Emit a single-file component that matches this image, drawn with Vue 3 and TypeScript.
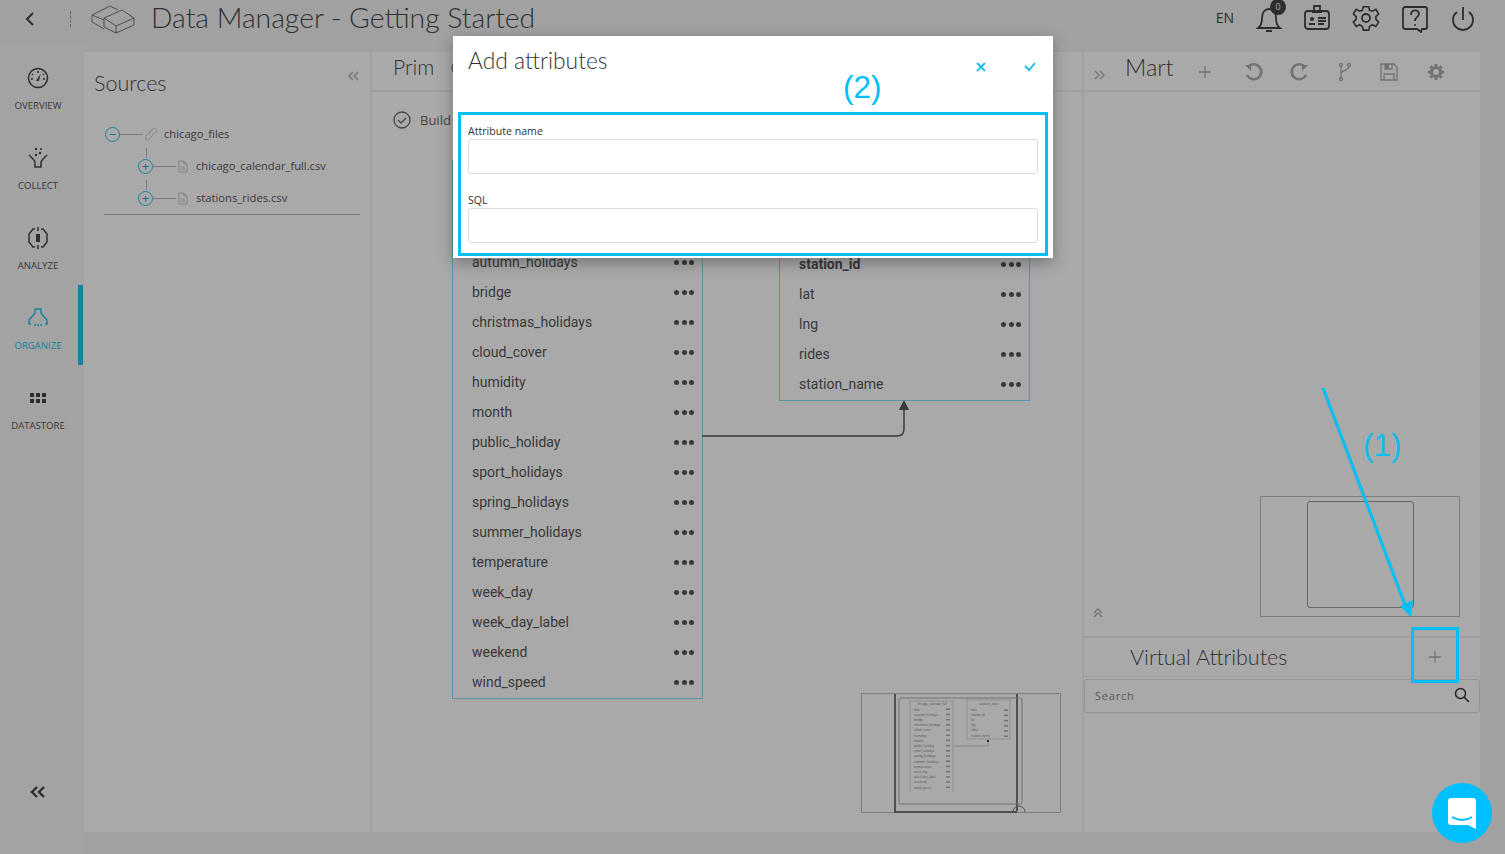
<script setup lang="ts">
const navItems = [
  { id: 'overview', label: 'OVERVIEW' },
  { id: 'collect', label: 'COLLECT' },
  { id: 'analyze', label: 'ANALYZE' },
  { id: 'organize', label: 'ORGANIZE' },
  { id: 'datastore', label: 'DATASTORE' }
]

const sourceFiles = ['chicago_calendar_full.csv', 'stations_rides.csv']

const calendarCols = [
  'date', 'autumn_holidays', 'bridge', 'christmas_holidays', 'cloud_cover', 'humidity', 'month',
  'public_holiday', 'sport_holidays', 'spring_holidays', 'summer_holidays', 'temperature',
  'week_day', 'week_day_label', 'weekend', 'wind_speed'
]
const stationCols = ['date', 'station_id', 'lat', 'lng', 'rides', 'station_name']
</script>

<template>
  <div class="page">
    <header class="topbar">
      <svg class="back" width="12" height="16" viewBox="0 0 12 16"><path d="M9 2 3 8l6 6" /></svg>
      <span class="sep"></span>
      <svg class="logo" width="46" height="30" viewBox="0 0 46 30">
        <path d="M2 11 20 2l8 4 M2 11l12 5 M2 11v7l12 7 M14 14 32 6l12 8-18 8z M14 14v9l12 6v-7 M26 29l18-8v-7" />
      </svg>
      <h1>Data Manager - Getting Started</h1>
      <div class="top-actions">
        <span class="lang">EN</span>
        <span class="bell">
          <svg width="26" height="30" viewBox="0 0 26 30"><path d="M2 25c3-2 4-5 4-10 0-6 3-9 7-9s7 3 7 9c0 5 1 8 4 10z M10 28h6" /></svg>
          <b>0</b>
        </span>
        <svg class="ti" width="28" height="30" viewBox="0 0 28 30"><rect x="2" y="8" width="24" height="18" rx="3" /><path d="M11 8V3h6v5 M9 9h10 M15 15h8 M15 18h8 M15 21h6" /><circle cx="9" cy="16" r="2" class="fill" /><path d="M6 22h6v-2H6z" class="fill" /></svg>
        <svg class="ti" width="28" height="30" viewBox="0 0 28 30"><path d="M11 3h6l1 4 3 1 4-2 3 5-3 3v3l3 3-3 5-4-2-3 2-1 4h-6l-1-4-3-2-4 2-3-5 3-3v-3L0 11l3-5 4 2 3-1z" transform="translate(1.4 1) scale(.9)" /><circle cx="14" cy="15" r="4" /></svg>
        <svg class="ti" width="28" height="30" viewBox="0 0 28 30"><path d="M4 4h20a2 2 0 0 1 2 2v18a2 2 0 0 1-2 2h-3l-1 3-4-3H4a2 2 0 0 1-2-2V6a2 2 0 0 1 2-2z" /><path d="M10 12c0-6 8-6 8-1 0 3-4 3-4 7" /><circle cx="14" cy="22" r="1" class="fill" /></svg>
        <svg class="ti" width="26" height="30" viewBox="0 0 26 30"><path d="M13 4v13 M7 9a10 10 0 1 0 12 0" /></svg>
      </div>
    </header>

    <div class="body-row">
      <nav class="sidenav">
        <a v-for="item in navItems" :key="item.id" class="nav-item" :class="{ active: item.id === 'organize' }">
          <svg width="24" height="24" viewBox="0 0 24 24">
            <template v-if="item.id === 'overview'">
              <circle cx="12" cy="12" r="9.500" /><path d="M12 5v2 M6 8l1 1 M18 8l-1 1 M5 13h2 M19 13h-2" /><path d="M14.500 8l-1.500 7h-3z" class="fill" />
            </template>
            <template v-else-if="item.id === 'collect'">
              <path d="M3 9l4 4c2 2 2 2 2 4v4h6v-4c0-2 0-2 2-4l4-4" /><circle cx="10" cy="3" r="1.200" class="fill" /><circle cx="14" cy="7" r="1.200" class="fill" /><circle cx="10" cy="9" r="1.200" class="fill" /><circle cx="15" cy="3" r="1" class="fill" />
            </template>
            <template v-else-if="item.id === 'analyze'">
              <path d="M9 3H7L3 8v8l4 5h2 M15 3h2l4 5v8l-4 5h-2 M12 1v4 M12 19v4" /><path d="M10 8h4v8h-4z" class="fill" />
            </template>
            <template v-else-if="item.id === 'organize'">
              <path d="M9 3h6v4l6 7v4h-2 M9 3v4l-6 7v4h2" /><path d="M8 19h2 M11 19h2 M14 19h2" />
            </template>
            <template v-else>
              <path d="M4 7h4v4H4z M10 7h4v4h-4z M16 7h4v4h-4z M4 13h4v4H4z M10 13h4v4h-4z M16 13h4v4h-4z" class="fill" />
            </template>
          </svg>
          <span>{{ item.label }}</span>
        </a>
        <div class="collapse">
          <svg width="16" height="12" viewBox="0 0 16 12"><path d="M7 1 2 6l5 5 M14 1 9 6l5 5" /></svg>
        </div>
      </nav>

      <section class="panel sources">
        <div class="sources-head">
          <h2>Sources</h2>
          <svg class="dbl" width="11" height="10" viewBox="0 0 11 10"><path d="M5 1 1 5l4 4 M10 1 6 5l4 4" /></svg>
        </div>
        <ul class="tree">
          <li class="root">
            <span class="toggle">−</span>
            <span class="dash"></span>
            <svg class="link-ico" width="14" height="14" viewBox="0 0 14 14"><path d="M6 8c-1-1-1-2 0-3l3-3c1-1 2-1 3 0s1 2 0 3l-2 2 M8 6c1 1 1 2 0 3l-3 3c-1 1-2 1-3 0s-1-2 0-3l2-2" /></svg>
            <span class="name">chicago_files</span>
          </li>
          <li v-for="f in sourceFiles" :key="f" class="child">
            <span class="stem"></span>
            <span class="toggle">+</span>
            <span class="dash"></span>
            <svg class="file-ico" width="12" height="13" viewBox="0 0 12 13"><path d="M2 1h5l3 3v8H2z M7 1v3h3 M4 7h4 M4 9h4" /></svg>
            <span class="name">{{ f }}</span>
          </li>
        </ul>
      </section>

      <section class="panel prim">
        <div class="panel-head">
          <h2>Prim</h2>
          <svg class="cut-ico" width="14" height="14" viewBox="0 0 14 14"><circle cx="7" cy="7" r="6" /></svg>
        </div>
        <div class="canvas">
          <div class="build">
            <svg width="18" height="18" viewBox="0 0 18 18"><circle cx="9" cy="9" r="8" /><path d="M5 9l3 3 5-5" /></svg>
            <span>Build</span>
          </div>

          <div class="node node-calendar">
            <div class="node-title">chicago_calendar_full</div>
            <div v-for="c in calendarCols" :key="c" class="col">
              <span>{{ c }}</span><i class="dots"><b></b><b></b><b></b></i>
            </div>
          </div>
          <div class="node node-stations">
            <div class="node-title">stations_rides</div>
            <div v-for="c in stationCols" :key="c" class="col" :class="{ key: c === 'station_id' }">
              <span>{{ c }}</span><i class="dots"><b></b><b></b><b></b></i>
            </div>
          </div>
          <svg class="link" width="210" height="40" viewBox="0 0 210 40">
            <path d="M0 36h195q7 0 7-7V10" />
            <path d="M202 0l5 10h-10z" class="head" />
          </svg>

          <div class="minimap map-prim">
            <svg width="198" height="119" viewBox="0 0 198 119">
              <path d="M33 0v119 M155 0v117 M33 118h122" class="frame" />
              <path d="M151 118a5 5 0 0 1 12 0" class="frame thin" />
              <rect x="37" y="4" width="123" height="106" rx="2" class="inner" />
              <path d="M48 98V7h43v91 M105 6h43 M105 6v39h43 M148 6v39" class="mini-box" />
              <text x="70" y="11" text-anchor="middle" class="mini-head">chicago_calendar_full</text>
              <text x="127" y="11" text-anchor="middle" class="mini-head">stations_rides</text>
              <g v-for="(c, i) in calendarCols" :key="c">
                <text x="52" :y="16.500 + i * 5.200" class="mini-row">{{ c }}</text>
                <rect x="84" :y="14.500 + i * 5.200" width="4" height="1.500" class="mini-dot" />
              </g>
              <g v-for="(c, i) in stationCols" :key="c">
                <text x="109" :y="16.500 + i * 5.200" class="mini-row">{{ c }}</text>
                <rect x="142" :y="15.500 + i * 5.200" width="4" height="1.500" class="mini-dot" />
              </g>
              <path d="M91 52h35v-5" class="mini-link" />
              <rect x="125" y="46" width="2" height="2" class="mini-end" />
            </svg>
          </div>
        </div>
      </section>

      <section class="panel mart">
        <div class="panel-head mart-head">
          <svg class="dbl" width="11" height="10" viewBox="0 0 11 10"><path d="M1 1l4 4-4 4 M6 1l4 4-4 4" /></svg>
          <h2>Mart</h2>
          <svg class="tool plus" width="14" height="14" viewBox="0 0 14 14"><path d="M7 1v12 M1 7h12" /></svg>
          <svg class="tool fat undo" width="20" height="20" viewBox="0 0 20 20"><path d="M5 5a7.500 7.500 0 1 1-1 8" /><path d="M2 3h6v6z" class="fill" /></svg>
          <svg class="tool fat" width="20" height="20" viewBox="0 0 20 20"><path d="M15 5a7.500 7.500 0 1 0 1 8" /><path d="M18 3h-6v6z" class="fill" /></svg>
          <svg class="tool" width="14" height="20" viewBox="0 0 14 20"><circle cx="3" cy="3" r="1.500" /><circle cx="11" cy="3" r="1.500" /><circle cx="3" cy="17" r="1.500" /><path d="M3 4.500v11 M11 4.500c0 4-8 4-8 7" /></svg>
          <svg class="tool" width="18" height="18" viewBox="0 0 18 18"><path d="M1 1h13l3 3v13H1z M5 1v5h7V1 M4 17v-6h10v6" /><path d="M5 1h4v5H5z" class="fill" /></svg>
          <svg class="tool gear" width="18" height="18" viewBox="0 0 18 18"><circle cx="9" cy="9" r="4.500" /><path d="M9 1v3 M9 14v3 M1 9h3 M14 9h3 M3.300 3.300l2.200 2.200 M12.500 12.500l2.200 2.200 M3.300 14.700l2.200-2.200 M12.500 5.500l2.200-2.200" /></svg>
        </div>

        <div class="mart-canvas">
          <div class="minimap map-mart"><div class="viewport"></div></div>
          <svg class="up" width="10" height="10" viewBox="0 0 10 10"><path d="M1 5l4-4 4 4 M1 9l4-4 4 4" /></svg>
        </div>

        <div class="va-head">
          <h2>Virtual Attributes</h2>
          <svg class="tool plus" width="12" height="12" viewBox="0 0 12 12"><path d="M6 0v12 M0 6h12" /></svg>
        </div>
        <div class="search">
          <span>Search</span>
          <svg width="16" height="16" viewBox="0 0 16 16"><circle cx="6.500" cy="6.500" r="5" /><path d="M10 10l5 5" /></svg>
        </div>
      </section>
    </div>

    <div class="overlay"></div>

    <div class="modal">
      <div class="modal-head">
        <h3>Add attributes</h3>
        <div class="modal-actions">
          <svg width="10" height="10" viewBox="0 0 10 10"><path d="M1 1l8 8 M9 1l-8 8" /></svg>
          <svg width="12" height="10" viewBox="0 0 12 10"><path d="M1 4l4 4 6-7" /></svg>
        </div>
      </div>
      <div class="hint">(2)</div>
      <form class="modal-form">
        <label>Attribute name</label>
        <input type="text" />
        <label>SQL</label>
        <input type="text" />
      </form>
    </div>

    <svg class="annot-arrow" width="100" height="240" viewBox="0 0 100 240">
      <path d="M2 2l84 222" />
      <path d="M90 231 79 220l13-6z" class="tip" />
    </svg>
    <div class="hint hint-1">(1)</div>
    <div class="annot-box"></div>

    <button class="chat" type="button">
      <svg width="28" height="31" viewBox="0 0 28 31">
        <path d="M3 0h22a3 3 0 0 1 3 3v28l-8-4H3a3 3 0 0 1-3-3V3a3 3 0 0 1 3-3z" />
        <path d="M4 19c6 4 14 4 20 0" class="smile" />
      </svg>
    </button>
  </div>
</template>

<style scoped>
.page {
  position: relative;
  width: 100%;
  height: 854px;
  overflow: hidden;
  background: #f0f0f0;
  color: #555;
  font-family: "Open Sans", "Liberation Sans", sans-serif;
}

svg {
  fill: none;
  stroke: currentColor;
  stroke-width: 1.3;
  display: block;
  flex: none;
}

svg .fill {
  fill: currentColor;
  stroke: none;
}

h1, h2, h3 {
  margin: 0;
  font-family: Lato, "Liberation Sans", sans-serif;
  font-weight: 300;
}

.topbar {
  height: 45px;
  display: flex;
  align-items: center;
  padding-left: 24px;
  padding-right: 29px;
  box-sizing: border-box;
}

.back {
  stroke-width: 2;
  color: #444;
  margin-top: -8px;
}

.sep {
  width: 0;
  height: 16px;
  border-left: 1px dashed #999;
  margin: -8px 0 0 34px;
}

.logo {
  margin: -8px 0 0 19px;
  color: #777;
  stroke-width: 1;
}

h1 {
  margin: -11px 0 0 15px;
  font-size: 28.300px;
  color: #4a4a4a;
  white-space: nowrap;
}

.top-actions {
  margin-left: auto;
  margin-top: -10px;
  display: flex;
  align-items: center;
  gap: 21px;
  color: #444;
}

.lang {
  font-size: 14px;
  margin-right: 1px;
}

.bell {
  position: relative;
  display: block;
}

.bell svg {
  stroke-width: 1.800;
}

.bell b {
  position: absolute;
  left: 14px;
  top: -4px;
  width: 16px;
  height: 16px;
  border-radius: 50%;
  background: #444;
  color: #eee;
  font-size: 9px;
  font-weight: 400;
  line-height: 16px;
  text-align: center;
}

.ti {
  stroke-width: 1.800;
}

.body-row {
  height: 809px;
  display: flex;
}

.sidenav {
  position: relative;
  width: 84px;
  flex: none;
  background: #f4f4f4;
}

.nav-item {
  height: 80px;
  box-sizing: border-box;
  margin-right: 1px;
  padding-top: 21px;
  padding-right: 7px;
  display: flex;
  flex-direction: column;
  align-items: center;
  font-size: 9.600px;
  color: #555;
}

.nav-item svg {
  color: #444;
  stroke-width: 1.500;
}

.nav-item span {
  margin-top: 9px;
  line-height: 14px;
}

.nav-item.active {
  color: #22c0ef;
  border-right: 5px solid #22c0ef;
  padding-right: 2px;
}

.nav-item.active svg {
  color: #22c0ef;
}

.collapse {
  position: absolute;
  left: 30px;
  top: 741px;
  color: #444;
}

.collapse svg {
  stroke-width: 2.400;
}

.panel {
  margin-top: 7px;
  height: 780px;
  background: #fdfdfd;
  box-sizing: border-box;
}

.sources {
  width: 286px;
  flex: none;
  padding: 0 10px 0 10px;
  margin-right: 2px;
  color: #555;
}

.sources-head {
  display: flex;
  justify-content: space-between;
  padding-top: 13px;
}

.sources-head h2 {
  font-size: 21.500px;
  line-height: 36px;
  color: #4a4a4a;
}

.dbl {
  color: #aaa;
  margin: 6px 1px 0 0;
}

.tree {
  list-style: none;
  margin: 17px 0 0 10px;
  padding: 0 0 0 1px;
  border-bottom: 1px solid #bbb;
  font-size: 11.200px;
  height: 97px;
  box-sizing: border-box;
}

.tree li {
  position: relative;
  height: 32px;
  display: flex;
  align-items: center;
}

.tree .name {
  margin-top: -2px;
}

.tree .child {
  padding-left: 33px;
}

.toggle {
  width: 13px;
  height: 13px;
  border: 1.300px solid #22c0ef;
  border-radius: 50%;
  color: #22a8d4;
  font-size: 13px;
  line-height: 13px;
  text-align: center;
  background: #fdfdfd;
  flex: none;
}

.dash {
  width: 23px;
  border-top: 1px solid #bbb;
}

.stem {
  position: absolute;
  left: 41px;
  top: -2px;
  height: 10px;
  border-left: 1px solid #bbb;
}

.link-ico, .file-ico {
  color: #c4c4c4;
  margin: 0 6px 0 1px;
  stroke-width: 1;
}

.file-ico {
  margin-right: 7px;
}

.prim {
  width: 710px;
  flex: none;
  margin-right: 2px;
  overflow: hidden;
}

.panel-head {
  height: 38px;
  border-bottom: 2px solid #ededed;
  box-sizing: content-box;
}

.prim .panel-head {
  display: flex;
  align-items: flex-start;
}

.prim .panel-head h2 {
  padding: 0 0 0 21px;
  font-size: 21.200px;
  line-height: 30px;
  color: #4a4a4a;
}

.cut-ico {
  color: #777;
  margin: 9px 0 0 17px;
}

.canvas {
  position: relative;
  height: 740px;
}

.build {
  position: absolute;
  left: 21px;
  top: 19px;
  display: flex;
  align-items: center;
  gap: 9px;
  font-size: 13px;
  color: #666;
}

.node {
  position: absolute;
  width: 251px;
  box-sizing: border-box;
  border: 1px solid #88dcf8;
  border-top: 0;
  font-family: Roboto, "Liberation Sans", sans-serif;
  font-size: 14px;
  color: #555;
}

.node-calendar {
  left: 80px;
  top: 68px;
  height: 539px;
}

.node-stations {
  left: 407px;
  top: 83px;
  height: 226px;
}

.node-calendar .node-title {
  height: 57px;
}

.node-stations .node-title {
  height: 44px;
}

.node-title {
  text-align: center;
  line-height: 44px;
}

.col {
  height: 30px;
  display: flex;
  align-items: center;
  justify-content: space-between;
  padding: 0 8px 0 19px;
}

.col.key {
  font-weight: 700;
}

.dots {
  display: flex;
  gap: 2.500px;
}

.dots b {
  width: 5px;
  height: 5px;
  border-radius: 50%;
  background: #555;
}

.link {
  position: absolute;
  left: 330px;
  top: 308px;
  color: #555;
  stroke-width: 1.500;
}

.link .head {
  fill: #555;
  stroke: none;
}

.minimap {
  position: absolute;
  box-sizing: border-box;
  border: 1px solid #bbb;
}

.map-prim {
  left: 489px;
  top: 601px;
  width: 200px;
  height: 120px;
}

.frame {
  stroke: #777;
  stroke-width: 2;
}

.frame.thin {
  stroke-width: 1;
}

.inner {
  stroke: #aaa;
  stroke-width: 1;
}

.mini-box {
  stroke: #c8c8c8;
  stroke-width: .7;
}

.mini-head {
  font-size: 3px;
  stroke: none;
  fill: #777;
}

.mini-row {
  font-size: 3px;
  stroke: none;
  fill: #777;
}

.mini-dot {
  fill: #aaa;
  stroke: none;
}

.mini-link {
  stroke: #bbb;
  stroke-width: .7;
}

.mini-end {
  fill: #444;
  stroke: none;
}

.mart {
  width: 396px;
  flex: none;
  display: flex;
  flex-direction: column;
}

.mart-head {
  display: flex;
  align-items: center;
  padding-left: 10px;
  color: #999;
}

.mart-head .dbl {
  margin: 8px 0 0 0;
}

.mart-head h2 {
  font-size: 23.500px;
  color: #4a4a4a;
  margin: -8px 0 0 20px;
  width: 66px;
  flex: none;
}

.tool {
  color: #aaa;
}

.plus {
  stroke-width: 1.300;
}

.mart-head .tool {
  margin-top: 1px;
  margin-left: 28px;
}

.mart-head .plus {
  margin-left: 7px;
}

.mart-head .fat {
  stroke-width: 2.600;
  margin-left: 27px;
}

.mart-head .undo {
  margin-left: 31px;
}

.mart-head .gear {
  stroke-width: 3;
  margin-left: 29px;
}

.mart-canvas {
  position: relative;
  height: 544px;
  border-bottom: 2px solid #ededed;
  flex: none;
}

.map-mart {
  left: 176px;
  top: 404px;
  width: 200px;
  height: 121px;
}

.viewport {
  position: absolute;
  left: 46px;
  top: 4px;
  width: 107px;
  height: 107px;
  border: 1px solid #999;
  border-radius: 3px;
  box-sizing: border-box;
}

.up {
  position: absolute;
  left: 9px;
  top: 516px;
  color: #aaa;
}

.va-head {
  height: 39px;
  flex: none;
  display: flex;
  align-items: center;
  justify-content: space-between;
  padding: 0 39px 0 46px;
  border-bottom: 1px solid #ededed;
  box-sizing: border-box;
}

.va-head h2 {
  font-size: 21.500px;
  color: #4a4a4a;
  line-height: 38px;
}

.search {
  height: 34px;
  margin-top: 2px;
  flex: none;
  border: 1px solid #ddd;
  border-radius: 3px;
  display: flex;
  align-items: center;
  justify-content: space-between;
  padding: 0 9px 2px 10px;
  font-size: 11px;
  letter-spacing: .8px;
  color: #888;
  box-sizing: border-box;
}

.search svg {
  color: #333;
  stroke-width: 1.500;
}

.overlay {
  position: absolute;
  inset: 0;
  background: rgba(0, 0, 0, .33);
}

.modal {
  position: absolute;
  left: 453px;
  top: 36px;
  width: 600px;
  height: 222px;
  background: #fff;
  box-shadow: 0 5px 15px rgba(0, 0, 0, .3);
}

.modal-head {
  display: flex;
  justify-content: space-between;
  padding: 5px 17px 0 15px;
}

.modal-head h3 {
  font-size: 22.800px;
  line-height: 38px;
  color: #333;
}

.modal-actions {
  display: flex;
  gap: 38px;
  padding-top: 21px;
  color: #22bdea;
}

.modal-actions svg {
  stroke-width: 1.900;
}

.hint {
  position: absolute;
  left: 390px;
  top: 31px;
  font-family: "Liberation Sans", sans-serif;
  font-size: 31.500px;
  line-height: 40px;
  color: #00bff5;
}

.modal-form {
  position: absolute;
  left: 5px;
  top: 76px;
  width: 590px;
  height: 144px;
  box-sizing: border-box;
  border: 3px solid #00bff5;
  padding: 9px 7px 0 7px;
  display: flex;
  flex-direction: column;
}

.modal-form label {
  font-size: 10.600px;
  line-height: 15px;
  color: #333;
}

.modal-form input {
  flex: none;
  height: 35px;
  box-sizing: border-box;
  border: 1px solid #ddd;
  border-radius: 3px;
  margin: 0 0 19px;
  padding: 0;
  outline: 0;
  background: #fff;
}

.annot-arrow {
  position: absolute;
  left: 1321px;
  top: 386px;
  color: #00bff5;
  stroke-width: 3;
}

.annot-arrow .tip {
  fill: #00bff5;
  stroke: none;
}

.hint-1 {
  left: 1363px;
  top: 425px;
  font-weight: 400;
  opacity: .9;
}

.annot-box {
  position: absolute;
  left: 1411px;
  top: 627px;
  width: 48px;
  height: 56px;
  box-sizing: border-box;
  border: 3px solid #00bff5;
}

.chat {
  position: absolute;
  left: 1432px;
  top: 783px;
  width: 60px;
  height: 60px;
  padding: 0;
  border: 0;
  border-radius: 50%;
  background: #00bfff;
  display: flex;
  align-items: center;
  justify-content: center;
}

.chat svg path {
  fill: #fff;
  stroke: none;
}

.chat svg .smile {
  fill: none;
  stroke: #00bfff;
  stroke-width: 2;
}
</style>

<style>
html, body {
  margin: 0;
  overflow: hidden;
}
</style>
